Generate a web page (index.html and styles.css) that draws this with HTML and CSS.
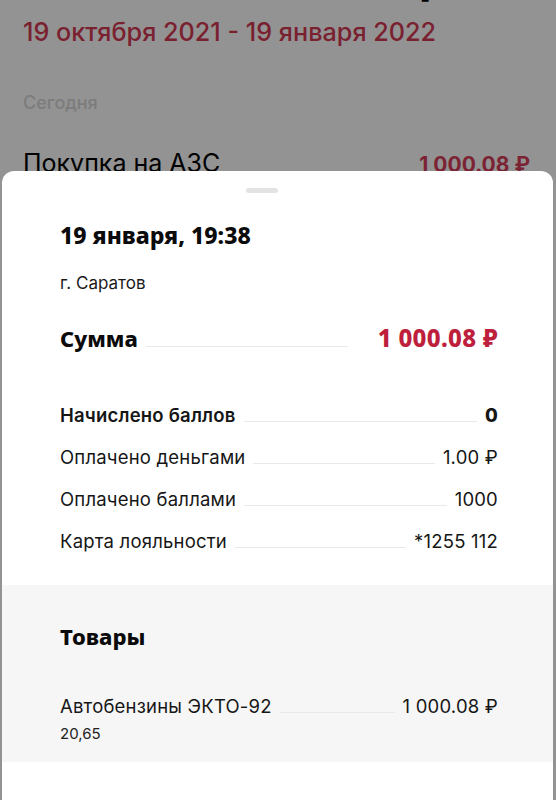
FILE: index.html
```html
<!DOCTYPE html>
<html lang="ru">
<head>
  <meta charset="UTF-8">
  <meta name="viewport" content="width=device-width, initial-scale=1.0">
  <title>Операция</title>
  <link rel="stylesheet" href="styles.css">
</head>
<body>
  <div class="screen">
    <h1 class="page-title">Выписка по карте</h1>
    <div class="period">19 октября 2021 - 19 января 2022</div>
    <div class="day">Сегодня</div>
    <div class="op">
      <span>Покупка на АЗС</span>
      <span class="op-sum">1 000.08 ₽</span>
    </div>
  </div>

  <div class="sheet">
    <div class="handle"></div>
    <div class="block">
      <h2 class="when">19 января, 19:38</h2>
      <div class="city">г. Саратов</div>
      <div class="row total">
        <span>Сумма</span>
        <i class="dots"></i>
        <span class="red">1 000.08 ₽</span>
      </div>
      <div class="rows">
        <div class="row strong">
          <span>Начислено баллов</span>
          <i class="dots"></i>
          <span>0</span>
        </div>
        <div class="row">
          <span>Оплачено деньгами</span>
          <i class="dots"></i>
          <span>1.00 ₽</span>
        </div>
        <div class="row">
          <span>Оплачено баллами</span>
          <i class="dots"></i>
          <span>1000</span>
        </div>
        <div class="row">
          <span>Карта лояльности</span>
          <i class="dots"></i>
          <span>*1255 112</span>
        </div>
      </div>
    </div>
    <div class="goods">
      <h2 class="goods-title">Товары</h2>
      <div class="row">
        <span>Автобензины ЭКТО-92</span>
        <i class="dots"></i>
        <span>1 000.08 ₽</span>
      </div>
      <div class="qty">20,65</div>
    </div>
  </div>
</body>
</html>
```

FILE: styles.css
```css
html, body {
  margin: 0;
  padding: 0;
  height: 100%;
  overflow: hidden;
  background: #939393;
  font-family: Inter, 'Liberation Sans', sans-serif;
  color: #111;
}

.screen {
  padding: 0 26px 0 23px;
}

.page-title {
  margin: -44px 0 0 100px;
  font-size: 40px;
  font-weight: 800;
  line-height: 48px;
  color: #000;
  white-space: nowrap;
}

.period {
  margin-top: 13px;
  font-size: 25.2px;
  font-weight: 500;
  line-height: 30px;
  color: #7a2130;
}

.day {
  margin-top: 45px;
  font-size: 18px;
  font-weight: 500;
  line-height: 22px;
  color: #7c7c7c;
}

.op {
  display: flex;
  justify-content: space-between;
  align-items: baseline;
  margin-top: 34px;
  font-size: 25px;
  line-height: 30px;
  color: #000;
}

.op-sum {
  font-weight: 700;
  font-size: 21px;
  color: #7c2333;
}

.sheet {
  position: absolute;
  top: 171px;
  left: 2px;
  right: 3px;
  bottom: 0;
  background: #fff;
  border-radius: 12px 12px 0 0;
}

.handle {
  width: 32px;
  height: 5px;
  margin: 17px 0 0 244px;
  border-radius: 3px;
  background: #e3e3e3;
}

.block {
  padding: 0 55px 33px 58px;
}

.when {
  margin: 27px 0 0;
  font-family: 'Noto Sans', sans-serif;
  font-size: 23px;
  font-weight: 800;
  line-height: 30px;
  color: #0b0b0b;
}

.city {
  margin-top: 23px;
  font-size: 17px;
  color: #1a1a1a;
}

.row {
  display: flex;
  align-items: baseline;
  gap: 8px;
  font-size: 18.5px;
  letter-spacing: 0.2px;
  color: #161616;
}

.dots {
  flex: 1;
  border-bottom: 1px solid #e9e9e9;
}

.total {
  margin-top: 28px;
  font-family: 'Noto Sans', sans-serif;
  font-size: 22px;
  font-weight: 800;
  letter-spacing: 0;
  color: #0b0b0b;
}

.total .dots {
  margin-right: 22px;
}

.total .red {
  font-size: 24px;
  letter-spacing: 0.3px;
  color: #bd1f3d;
}

.rows {
  display: flex;
  flex-direction: column;
  gap: 20px;
  margin-top: 50px;
}

.strong {
  font-weight: 600;
}

.strong span:last-child {
  font-weight: 800;
}

.goods {
  background: #f6f6f6;
  padding: 36px 55px 19px 58px;
}

.goods-title {
  margin: 0 0 44px;
  font-family: 'Noto Sans', sans-serif;
  font-size: 22px;
  font-weight: 800;
  line-height: 30px;
  color: #0b0b0b;
}

.qty {
  margin-top: 7px;
  font-size: 15px;
  color: #222;
}
```
